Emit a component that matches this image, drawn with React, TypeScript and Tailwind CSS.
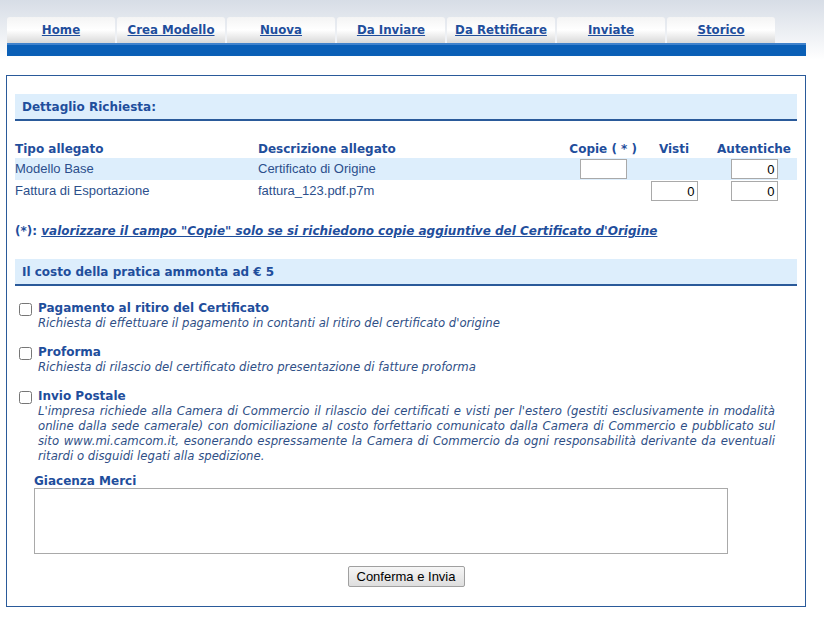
import { useState } from 'react';

const TABS = ['Home', 'Crea Modello', 'Nuova', 'Da Inviare', 'Da Rettificare', 'Inviate', 'Storico'];

const VERDANA = 'font-["DejaVu_Sans",Verdana,sans-serif]';
const ARIAL = 'font-["Liberation_Sans",Arial,sans-serif]';

function SectionBar({ children }: { children: React.ReactNode }) {
  return (
    <div className="bg-[#ddeefc] border-b-2 border-[#2a5a9a] h-[27px] flex items-center px-[7px]">
      <span className={`${VERDANA} text-[12px] font-bold text-[#1f4e9c]`}>{children}</span>
    </div>
  );
}

function Option({ title, children }: { title: string; children: React.ReactNode }) {
  const [checked, setChecked] = useState(false);
  return (
    <div className="flex items-start">
      <input
        type="checkbox"
        checked={checked}
        onChange={(e) => setChecked(e.target.checked)}
        className="w-[13px] h-[13px] mt-[2px] ml-[4px] mr-[6px] shrink-0 accent-[#d8d8d8]"
      />
      <div className="flex-1 pr-[22px]">
        <div className={`${VERDANA} text-[12px] font-bold text-[#1f4e9c] leading-[15px]`}>{title}</div>
        <div className={`${VERDANA} text-[11.7px] italic text-[#2f4f86] leading-[15px] text-justify`}>{children}</div>
      </div>
    </div>
  );
}

export default function App() {
  return (
    <div className="w-[824px] h-[618px] bg-white overflow-hidden">
      <div className="h-[60px] bg-gradient-to-b from-[#d7dde6] to-[#ffffff] pt-[17px]">
        <div className="flex gap-[2px] pl-[7px] h-[26px]">
          {TABS.map((t) => (
            <div
              key={t}
              className="w-[108px] rounded-t-[3px] bg-gradient-to-b from-[#f4f4f4] via-[#ffffff] to-[#d9d9d9] flex items-center justify-center pt-[2px]"
            >
              <a href="#" className={`${VERDANA} text-[11.8px] font-bold text-[#1f4e9c] underline`}>
                {t}
              </a>
            </div>
          ))}
        </div>
        <div className="ml-[7px] w-[799px] h-[13px] bg-[#0a5fb6] border-t-2 border-[#3f82cc]" />
      </div>

      <div className="ml-[6px] mt-[15px] w-[800px] h-[532px] border border-[#2a5a9a] px-[8px] pt-[18px]">
        <SectionBar>Dettaglio Richiesta:</SectionBar>

        <table className="w-full mt-[19px] border-collapse">
          <thead>
            <tr className={`${VERDANA} text-[12px] font-bold text-[#1f4e9c]`}>
              <th className="text-left font-bold h-[18px] w-[243px]">Tipo allegato</th>
              <th className="text-left font-bold">Descrizione allegato</th>
              <th className="text-center font-bold w-[66px] whitespace-nowrap">Copie ( * )</th>
              <th className="text-center font-bold w-[74px]">Visti</th>
              <th className="text-center font-bold w-[86px]">Autentiche</th>
            </tr>
          </thead>
          <tbody className={`${ARIAL} text-[13px] text-[#2c4f8c]`}>
            <tr className="bg-[#ddeefc] h-[22px]">
              <td>Modello Base</td>
              <td>Certificato di Origine</td>
              <td className="text-center">
                <input className="w-[47px] h-[20px] border border-[#a9a9a9] bg-white align-middle" />
              </td>
              <td />
              <td className="text-center">
                <input defaultValue="0" className="w-[47px] h-[20px] border border-[#a9a9a9] bg-white text-right pr-[2px] text-[#000] align-middle" />
              </td>
            </tr>
            <tr className="h-[22px]">
              <td>Fattura di Esportazione</td>
              <td>fattura_123.pdf.p7m</td>
              <td />
              <td className="text-center">
                <input defaultValue="0" className="w-[47px] h-[20px] border border-[#a9a9a9] bg-white text-right pr-[2px] text-[#000] align-middle" />
              </td>
              <td className="text-center">
                <input defaultValue="0" className="w-[47px] h-[20px] border border-[#a9a9a9] bg-white text-right pr-[2px] text-[#000] align-middle" />
              </td>
            </tr>
          </tbody>
        </table>

        <div className={`${VERDANA} text-[12px] font-bold text-[#1f4e9c] mt-[20px]`}>
          (*):{' '}
          <a href="#" className="italic underline">
            valorizzare il campo "Copie" solo se si richiedono copie aggiuntive del Certificato d'Origine
          </a>
        </div>

        <div className="mt-[19px]">
          <SectionBar>Il costo della pratica ammonta ad € 5</SectionBar>
        </div>

        <div className="mt-[15px] flex flex-col gap-[14px]">
          <Option title="Pagamento al ritiro del Certificato">
            Richiesta di effettuare il pagamento in contanti al ritiro del certificato d'origine
          </Option>
          <Option title="Proforma">
            Richiesta di rilascio del certificato dietro presentazione di fatture proforma
          </Option>
          <Option title="Invio Postale">
            L'impresa richiede alla Camera di Commercio il rilascio dei certificati e visti per l'estero (gestiti
            esclusivamente in modalità online dalla sede camerale) con domiciliazione al costo forfettario comunicato
            dalla Camera di Commercio e pubblicato sul sito www.mi.camcom.it, esonerando espressamente la Camera di
            Commercio da ogni responsabilità derivante da eventuali ritardi o disguidi legati alla spedizione.
          </Option>
        </div>

        <div className="ml-[19px] mt-[10px]">
          <div className={`${VERDANA} text-[12px] font-bold text-[#1f4e9c] leading-[14px]`}>Giacenza Merci</div>
          <textarea className="block w-[694px] h-[66px] border border-[#a9a9a9] resize-none bg-white" />
        </div>

        <div className="flex justify-center mt-[12px]">
          <button
            className={`${ARIAL} text-[13px] text-black h-[21px] px-[8px] border border-[#a0a0a0] rounded-[2px] bg-gradient-to-b from-[#f6f6f6] to-[#dedede]`}
          >
            Conferma e Invia
          </button>
        </div>
      </div>
    </div>
  );
}
